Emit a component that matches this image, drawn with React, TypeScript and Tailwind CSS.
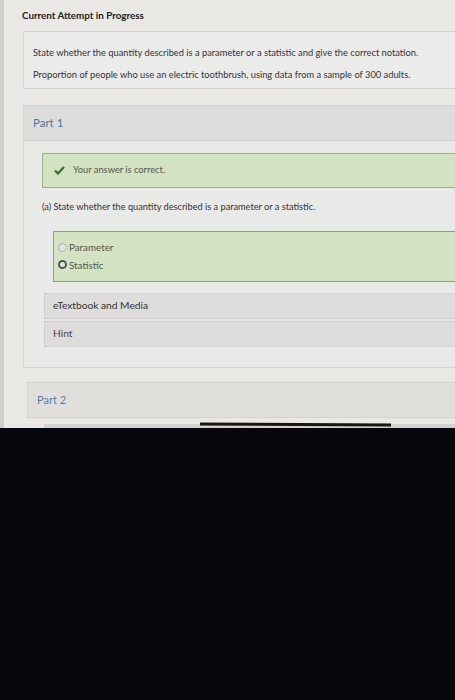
export default function App() {
  return (
    <div className="w-[455px] h-[700px] flex flex-col overflow-hidden font-['Lato','Liberation_Sans',sans-serif]">
      <div className="h-[428px] flex flex-col bg-[#e9e8e5] border-l-[4px] border-[#cfcecb] pl-[18px] relative">
        <div className="pt-[8px] h-[31px] text-[9.8px] font-bold text-[#222]">Current Attempt in Progress</div>

        <div className="ml-px h-[58px] bg-[#ebebe9] border border-r-0 border-[#d2d2d0] pl-[9px] flex flex-col text-[9.3px] text-[#333] whitespace-nowrap">
          <div className="mt-[14px]">State whether the quantity described is a parameter or a statistic and give the correct notation.</div>
          <div className="mt-[8px]">Proportion of people who use an electric toothbrush, using data from a sample of 300 adults.</div>
        </div>

        <div className="ml-px mt-[16px] h-[264px] border border-r-0 border-[#d2d2d0] flex flex-col">
          <div className="h-[35px] bg-[#dcdcda] border-b border-[#cfcfcd] pl-[9px] flex items-center text-[11.5px] text-[#4c79aa]">Part 1</div>
          <div className="flex-1 bg-[#e9e9e7] pl-[18px] flex flex-col">
            <div className="mt-[12px] h-[35px] bg-[#d3e2c0] border border-r-0 border-[#9fae8f] flex items-center pl-[11px]">
              <svg width="11" height="9" viewBox="0 0 11 9">
                <path d="M1 4.5 L4 7.5 L10 1" fill="none" stroke="#2f6b2f" strokeWidth="2.2" />
              </svg>
              <span className="ml-[8px] text-[9.3px] text-[#555]">Your answer is correct.</span>
            </div>
            <div className="mt-[12px] text-[9.2px] text-[#333] whitespace-nowrap">(a) State whether the quantity described is a parameter or a statistic.</div>
            <div className="ml-[11px] mt-[17px] h-[51px] bg-[#d4e3c2] border border-r-0 border-[#8e9c80] pl-[4px] flex flex-col justify-center gap-[3px] text-[9.8px] text-[#555]">
              <div className="flex items-center gap-[2px]">
                <span className="w-[9px] h-[9px] rounded-full border border-[#aaa] bg-[#e4e4e2]" />
                <span>Parameter</span>
              </div>
              <div className="flex items-center gap-[2px]">
                <span className="w-[9px] h-[9px] rounded-full border-[2.5px] border-[#555] bg-[#e4e4e2]" />
                <span>Statistic</span>
              </div>
            </div>
            <div className="ml-[2px] mt-[11px] h-[26px] bg-[#dedddb] border border-r-0 border-[#cfcfcd] pl-[8px] flex items-center text-[10.2px] text-[#333]">eTextbook and Media</div>
            <div className="ml-[2px] mt-[2px] h-[26px] bg-[#dedddb] border border-r-0 border-[#cfcfcd] pl-[8px] flex items-center text-[10.2px] text-[#444]">Hint</div>
          </div>
        </div>

        <div className="ml-[5px] mt-[14px] h-[36px] bg-[#e0dfdc] border border-r-0 border-[#d2d2d0] pl-[9px] flex items-center text-[11px] text-[#5d7fa6]">Part 2</div>
        <div className="ml-[22px] mt-[6px] h-[4px] bg-[#d6d0cf]" />
        <div className="absolute left-[196px] top-[423px] w-[191px] h-[3px] bg-[#1a1414] rotate-[0.3deg]" />
      </div>
      <div className="flex-1 bg-[#06070c]" />
    </div>
  );
}
